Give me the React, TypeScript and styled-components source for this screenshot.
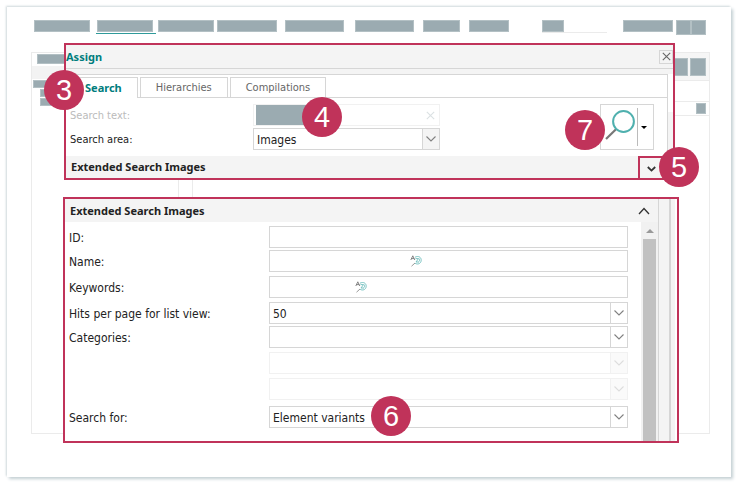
import React from "react";
import styled, { createGlobalStyle, css } from "styled-components";

const crimson = "#c0335a";
const slate = "#9babb1";
const teal = "#007d7d";
const line = "#d6d6d6";
const faint = "#ebebeb";
const panelGray = "#f4f4f4";
const headingFont = css`
  font: 700 11px/16px "Noto Sans", sans-serif;
`;

const GlobalStyle = createGlobalStyle`
  * { box-sizing: border-box; }
  body {
    margin: 0;
    background: #fff;
    color: #222;
    font: 11px/16px "DejaVu Sans Condensed", "Noto Sans", sans-serif;
  }
  button, input, select { font: inherit; color: inherit; }
`;

const Page = styled.div`
  padding: 7px 10px 10px 7px;
`;

const Card = styled.main`
  padding-bottom: 34px;
  background: #fff;
  box-shadow: -1px -1px 2px #cfd8db, 2px 2px 3px #c3cfd3;
`;

const Nav = styled.nav`
  display: flex;
  align-items: flex-start;
  height: 36px;
  padding: 13px 25px 0 27px;
`;

const Block = styled.span<{ $w: number; $h?: number; $gap?: number }>`
  flex: 0 1 ${(p) => p.$w}px;
  width: ${(p) => p.$w}px;
  height: ${(p) => p.$h ?? 12}px;
  margin-left: ${(p) => p.$gap ?? 0}px;
  background: ${slate};
  border: 1px solid #b3c0c4;
`;

const CurrentItem = styled.span`
  display: flex;
  flex: 0 1 60px;
  margin-left: 6px;
  padding: 0 3px 1px 1px;
  border-bottom: 1px solid #2f9a9a;
`;

const NavSearch = styled.span`
  display: flex;
  flex: 0 1 65px;
  margin-left: 33px;
  border-bottom: 1px solid ${faint};
`;

const Spacer = styled.span`
  flex: 1;
`;

const Stage = styled.div`
  display: grid;
  grid-template-columns: minmax(0, 1fr);
  > * { grid-area: 1 / 1; }
`;

const Backdrop = styled.div`
  display: grid;
  grid-template-columns: 147px 13px 1fr;
  margin: 9px 21px 9px 24px;
  border: 1px solid ${faint};
`;

const TreePane = styled.div`
  border-right: 1px solid ${faint};
`;

const TreeTabs = styled.div`
  display: flex;
  height: 26px;
  padding: 1px 0 0 5px;
  border-bottom: 13px solid #f3f3f3;
`;

const TreeRow = styled.div<{ $indent: number }>`
  display: flex;
  padding: 1px 0 0 ${(p) => p.$indent}px;
`;

const ContentPane = styled.div`
  grid-column: 3;
  border-left: 1px solid ${faint};
`;

const PaneBar = styled.div<{ $tall?: boolean }>`
  display: flex;
  justify-content: flex-end;
  align-items: center;
  height: ${(p) => (p.$tall ? 28 : 15)}px;
  margin-bottom: ${(p) => (p.$tall ? 20 : 0)}px;
  padding-right: 3px;
  background: ${(p) => (p.$tall ? "#f6f6f6" : "#fff")};
  border: solid ${faint};
  border-width: ${(p) => (p.$tall ? "0 0 1px" : "1px 0")};
`;

const Stack = styled.div`
  z-index: 1;
  display: flex;
  flex-direction: column;
  gap: 17px;
  padding: 0 52px 0 56px;
`;

const Dialog = styled.section<{ $inset?: boolean }>`
  position: relative;
  margin: ${(p) => (p.$inset ? "0 4px 0 1px" : "0")};
  background: #fff;
  border: 2px solid ${crimson};
`;

const TitleBar = styled.header`
  display: flex;
  align-items: center;
  justify-content: space-between;
  height: 24px;
  background: ${panelGray};
  border-bottom: 1px solid ${line};
`;

const Title = styled.h1`
  margin: 0;
  ${headingFont}
  color: ${teal};
`;

const IconButton = styled.button`
  display: grid;
  place-items: center;
  padding: 0;
  background: transparent;
  border: 0;
`;

const CloseButton = styled(IconButton)`
  width: 14px;
  height: 14px;
  border: 1px solid ${line};
`;

const ClearButton = styled(IconButton)`
  width: 17px;
  height: 20px;
`;

const DialogBody = styled.div`
  display: flex;
  padding-top: 5px;
  background: ${panelGray};
`;

const TabPanel = styled.div`
  flex: 1;
  background: #fff;
  border: solid ${line};
  border-width: 1px 1px 0 0;
`;

const SideStrip = styled.div`
  width: 5px;
  height: 38px;
  background: #fff;
`;

const Tabs = styled.div`
  display: flex;
  gap: 2px;
  height: 23px;
  padding: 2px 0 0 3px;
  border-bottom: 1px solid ${line};
`;

const Tab = styled.button<{ $active?: boolean }>`
  height: ${(p) => (p.$active ? 21 : 20)}px;
  padding: 0 15px;
  background: #fff;
  border: 1px solid ${line};
  border-bottom: 0;
  color: #666;
  ${(p) =>
    p.$active &&
    css`
      ${headingFont}
      color: ${teal};
    `}
`;

const SearchForm = styled.div`
  display: flex;
  justify-content: space-between;
  padding: 6px 13px 6px 4px;
`;

const FieldGrid = styled.div`
  display: grid;
  grid-template-columns: 183px 187px;
  row-gap: 2px;
  align-items: center;
`;

const Label = styled.label<{ $muted?: boolean }>`
  padding-top: 1px;
  color: ${(p) => (p.$muted ? "#bbb" : "#222")};
`;

const Field = styled.div<{ $faint?: boolean }>`
  position: relative;
  display: flex;
  align-items: center;
  height: 22px;
  background: #fff;
  border: 1px solid ${(p) => (p.$faint ? "#f1f1f1" : line)};
`;

const TextInput = styled.input<{ $basis?: number }>`
  flex: ${(p) => (p.$basis ? `0 1 ${p.$basis}px` : "1")};
  min-width: 0;
  height: 20px;
  padding: 0 3px;
  background: transparent;
  border: 0;
  outline: 0;
`;

const SelectBox = styled.select`
  appearance: none;
  width: 100%;
  height: 20px;
  padding: 1px 20px 0 3px;
  background: transparent;
  border: 0;
  outline: 0;
  opacity: 1;
  font-size: 12px;
`;

const SelectArrow = styled.span<{ $tone: "filled" | "plain" | "faint" }>`
  position: absolute;
  inset: 0 0 0 auto;
  display: grid;
  place-items: center;
  width: 17px;
  pointer-events: none;
  color: ${(p) => (p.$tone === "faint" ? "#ddd" : "#808080")};
  background: ${(p) =>
    ({ filled: panelGray, plain: "#fff", faint: "#fafafa" })[p.$tone]};
  border-left: 1px solid ${(p) => (p.$tone === "faint" ? "#f1f1f1" : line)};
`;

const RedactedText = styled.span`
  flex: 0 0 70px;
  height: 20px;
  margin-left: 2px;
  background: ${slate};
`;

const SearchSplit = styled.div`
  position: relative;
  display: flex;
  align-items: center;
  width: 54px;
  height: 46px;
  border: 1px solid ${line};
`;

const SearchMenuButton = styled(IconButton)`
  width: 16px;
  height: 38px;
  padding-right: 3px;
  border-left: 1px solid #bbb;
`;

const SectionBar = styled.div<{ $height: number; $pad: number }>`
  display: flex;
  align-items: center;
  justify-content: space-between;
  height: ${(p) => p.$height}px;
  padding-left: ${(p) => p.$pad}px;
  background: ${panelGray};
`;

const SectionTitle = styled.h2`
  margin: 0;
  ${headingFont}
`;

const ExpandButton = styled(IconButton)`
  position: relative;
  align-self: stretch;
  width: 35px;
  padding: 2px 11px 0 0;
  border: solid ${crimson};
  border-width: 2px 0 0 2px;
`;

const CollapseButton = styled(IconButton)`
  width: 28px;
  height: 22px;
`;

const Columns = styled.div`
  display: flex;
`;

const Main = styled.div`
  flex: 1;
  min-width: 0;
`;

const Scrollable = styled.div`
  display: flex;
`;

const ExtendedForm = styled.div`
  flex: 1;
  padding: 4px 13px 13px 4px;
  font-size: 12px;
`;

const FormRow = styled.div<{ $gap: number }>`
  display: grid;
  grid-template-columns: 200px minmax(0, 1fr);
  align-items: center;
  margin-bottom: ${(p) => p.$gap}px;
`;

const ScrollTrack = styled.div`
  display: flex;
  flex-direction: column;
  align-items: center;
  width: 17px;
  background: #f1f1f1;
`;

const ScrollThumb = styled.div`
  flex: 1;
  width: 13px;
  background: #c1c1c1;
`;

const ScrollUp = styled(IconButton)`
  height: 17px;
`;

const Gutter = styled.div`
  width: 17px;
  margin-right: 2px;
  background: linear-gradient(${line}, ${line}) 10px 0 / 2px 100% no-repeat
    ${panelGray};
  border-left: 1px solid ${line};
`;

const Badge = styled.span<{ $x: string; $y: string }>`
  position: absolute;
  left: ${(p) => p.$x};
  top: ${(p) => p.$y};
  z-index: 2;
  display: grid;
  place-items: center;
  width: 40px;
  height: 40px;
  border-radius: 50%;
  background: ${crimson};
  color: #fff;
  font: 29px/40px "Liberation Sans", Arial, sans-serif;
`;

function Chevron({ up, bold }: { up?: boolean; bold?: boolean }) {
  const w = bold ? 9 : 12;
  return (
    <svg width={w} height={bold ? 6 : 8} viewBox={bold ? "0 0 9 6" : "0 0 12 8"} fill="none">
      <path
        d={bold ? "M.8 1 4.5 4.6 8.2 1" : up ? "M1 7 6 1.5 11 7" : "M1.5 1.5 6 6 10.5 1.5"}
        stroke={bold || up ? "#333" : "currentColor"}
        strokeWidth={bold ? 1.8 : up ? 1.3 : 1.1}
      />
    </svg>
  );
}

function Cross({ color }: { color: string }) {
  return (
    <svg width="9" height="9" viewBox="0 0 9 9" fill="none">
      <path d="M.8.8l7.4 7.4M8.2.8.8 8.2" stroke={color} strokeWidth="1.1" />
    </svg>
  );
}

function Magnifier() {
  return (
    <svg width="35" height="34" viewBox="0 0 35 34" fill="none">
      <path d="M5 29 15 19.2" stroke="#777" strokeWidth="2.2" />
      <circle cx="22.5" cy="11.5" r="10.4" fill="#fff" stroke="#4fb0ae" strokeWidth="2" />
    </svg>
  );
}

function TranslateIcon() {
  return (
    <svg width="12" height="12" viewBox="0 0 12 12" fill="none">
      <path d="M.8 5 2.8.8 4.8 5M1.5 3.6h2.7" stroke="#777" strokeWidth=".9" />
      <path d="M1.5 11.2 5 8" stroke="#999" />
      <path
        d="M5 2.2C8.5.4 11.3 2.3 11.2 5.3 11 9 7.2 9.8 5 8.2M5.5 3.6h3L6 7h2.8M9 3.5c1 1.2.7 2.8-.5 3.5"
        stroke="#6dbdbc"
        strokeWidth=".9"
      />
    </svg>
  );
}

type Row = {
  id: string;
  label?: string;
  kind: "text" | "select";
  value?: string;
  gap: number;
  disabled?: boolean;
  translateAt?: number;
};

const rows: Row[] = [
  { id: "element-id", label: "ID:", kind: "text", gap: 2 },
  { id: "name", label: "Name:", kind: "text", gap: 4, translateAt: 140 },
  { id: "keywords", label: "Keywords:", kind: "text", gap: 4, translateAt: 85 },
  { id: "hits", label: "Hits per page for list view:", kind: "select", value: "50", gap: 2 },
  { id: "category", label: "Categories:", kind: "select", gap: 4 },
  { id: "category-2", kind: "select", gap: 4, disabled: true },
  { id: "category-3", kind: "select", gap: 6, disabled: true },
  { id: "search-for", label: "Search for:", kind: "select", value: "Element variants", gap: 0 },
];

function ExtendedRow({ row }: { row: Row }) {
  return (
    <FormRow $gap={row.gap}>
      {row.label ? <Label htmlFor={row.id}>{row.label}</Label> : <span />}
      <Field $faint={row.disabled}>
        {row.kind === "text" ? (
          <TextInput id={row.id} $basis={row.translateAt} />
        ) : (
          <>
            <SelectBox
              id={row.id}
              disabled={row.disabled}
              aria-label={row.label ? undefined : "Subcategory"}
            >
              <option>{row.value ?? ""}</option>
            </SelectBox>
            <SelectArrow $tone={row.disabled ? "faint" : "plain"}>
              <Chevron />
            </SelectArrow>
          </>
        )}
        {row.translateAt && <TranslateIcon />}
      </Field>
    </FormRow>
  );
}

function AssignDialog() {
  return (
    <Dialog $inset aria-label="Assign">
      <TitleBar>
        <Title>Assign</Title>
        <CloseButton aria-label="Close">
          <Cross color="#666" />
        </CloseButton>
      </TitleBar>
      <DialogBody>
        <TabPanel>
          <Tabs role="tablist">
            <Tab role="tab" aria-selected $active>Search</Tab>
            <Tab role="tab">Hierarchies</Tab>
            <Tab role="tab">Compilations</Tab>
          </Tabs>
          <SearchForm>
            <FieldGrid>
              <Label htmlFor="search-text" $muted>Search text:</Label>
              <Field $faint>
                <RedactedText />
                <TextInput id="search-text" disabled />
                <ClearButton aria-label="Clear">
                  <Cross color="#dbe1e3" />
                </ClearButton>
                <Badge $x="48px" $y="-8px">4</Badge>
              </Field>
              <Label htmlFor="search-area">Search area:</Label>
              <Field>
                <SelectBox id="search-area">
                  <option>Images</option>
                </SelectBox>
                <SelectArrow $tone="filled">
                  <Chevron />
                </SelectArrow>
              </Field>
            </FieldGrid>
            <SearchSplit>
              <IconButton aria-label="Search">
                <Magnifier />
              </IconButton>
              <Spacer />
              <SearchMenuButton aria-label="Search options">
                <svg width="6" height="3" viewBox="0 0 6 3">
                  <path d="M0 0h6L3 3z" fill="#000" />
                </svg>
              </SearchMenuButton>
              <Badge $x="-36px" $y="5px">7</Badge>
            </SearchSplit>
          </SearchForm>
        </TabPanel>
        <SideStrip />
      </DialogBody>
      <SectionBar $height={22} $pad={5}>
        <SectionTitle>Extended Search Images</SectionTitle>
        <ExpandButton aria-label="Expand">
          <Chevron bold />
          <Badge $x="19px" $y="-11px">5</Badge>
        </ExpandButton>
      </SectionBar>
      <Badge $x="-22px" $y="25px">3</Badge>
    </Dialog>
  );
}

function ExtendedDialog() {
  return (
    <Dialog aria-label="Extended Search Images">
      <Columns>
        <Main>
          <SectionBar $height={23} $pad={5}>
            <SectionTitle>Extended Search Images</SectionTitle>
            <CollapseButton aria-label="Collapse">
              <Chevron up />
            </CollapseButton>
          </SectionBar>
          <Scrollable>
            <ExtendedForm>
              {rows.map((row) => (
                <ExtendedRow key={row.id} row={row} />
              ))}
            </ExtendedForm>
            <ScrollTrack>
              <ScrollUp aria-label="Scroll up">
                <svg width="8" height="4" viewBox="0 0 8 4">
                  <path d="M0 4h8L4 0z" fill="#999" />
                </svg>
              </ScrollUp>
              <ScrollThumb />
            </ScrollTrack>
          </Scrollable>
        </Main>
        <Gutter />
      </Columns>
      <Badge $x="306px" $y="197px">6</Badge>
    </Dialog>
  );
}

export default function App() {
  return (
    <>
      <GlobalStyle />
      <Page>
        <Card>
          <Nav>
            <Block $w={56} />
            <CurrentItem>
              <Block $w={56} />
            </CurrentItem>
            <Block $w={56} $gap={2} />
            <Block $w={60} $gap={3} />
            <Block $w={59} $gap={8} />
            <Block $w={59} $gap={11} />
            <Block $w={37} $gap={9} />
            <Block $w={40} $gap={9} />
            <NavSearch>
              <Block $w={22} />
            </NavSearch>
            <Spacer />
            <Block $w={50} />
            <Block $w={15} $h={15} $gap={3} />
            <Block $w={15} $h={15} />
          </Nav>
          <Stage>
            <Backdrop>
              <TreePane>
                <TreeTabs>
                  <Block $w={60} $h={10} />
                </TreeTabs>
                <TreeRow $indent={1}><Block $w={60} $h={8} /></TreeRow>
                <TreeRow $indent={8}><Block $w={60} $h={8} /></TreeRow>
                <TreeRow $indent={8}><Block $w={60} $h={8} /></TreeRow>
              </TreePane>
              <ContentPane>
                <PaneBar $tall>
                  <Block $w={16} $h={18} />
                  <Block $w={16} $h={18} $gap={2} />
                </PaneBar>
                <PaneBar>
                  <Block $w={10} $h={11} />
                </PaneBar>
              </ContentPane>
            </Backdrop>
            <Stack>
              <AssignDialog />
              <ExtendedDialog />
            </Stack>
          </Stage>
        </Card>
      </Page>
    </>
  );
}
